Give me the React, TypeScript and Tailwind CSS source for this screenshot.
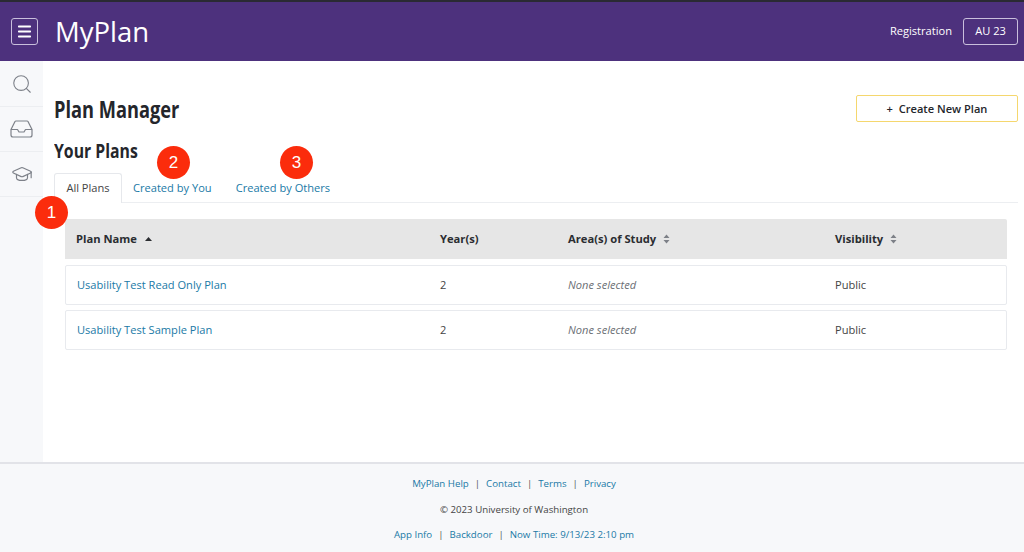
import { GraduationCap, Menu, Search } from 'lucide-react'

const linkColor = 'text-[#2079a6]'

const plans = [
  { name: 'Usability Test Read Only Plan', years: 2, visibility: 'Public' },
  { name: 'Usability Test Sample Plan', years: 2, visibility: 'Public' },
]

function Badge({ n, className }: { n: number; className: string }) {
  return (
    <div
      className={`absolute flex h-[33px] w-[33px] items-center justify-center rounded-full bg-[#fb2c0c] font-['Liberation_Sans',sans-serif] text-[17px] text-white ${className}`}
    >
      {n}
    </div>
  )
}

function SortIcon() {
  return (
    <svg width="7" height="10" viewBox="0 0 7 10" className="ml-[7px]">
      <path d="M3.5 0.5 L6.5 4 H0.5 Z M3.5 9.5 L6.5 6 H0.5 Z" fill="#7d8087" />
    </svg>
  )
}

function TrayIcon() {
  return (
    <svg width="23" height="18" viewBox="0 0 23 18" fill="none" stroke="currentColor" strokeWidth="1.2" strokeLinejoin="round">
      <path d="M1 9.5 L5 1.5 Q5.3 1 6 1 H17 Q17.7 1 18 1.5 L22 9.5" />
      <path d="M1 9.5 H7.5 L9 12 H14 L15.5 9.5 H22 V15 Q22 17 20 17 H3 Q1 17 1 15 Z" />
    </svg>
  )
}

function Sep() {
  return <span className="mx-[6px] text-[#555]">|</span>
}

export default function App() {
  return (
    <div className="relative flex h-[552px] w-[1024px] flex-col overflow-hidden bg-white font-['Open_Sans',sans-serif] text-[#444]">
      <header className="flex h-[61px] shrink-0 items-center border-t-2 border-[#2a2a33] bg-[#4d317d] pl-[11px] pr-[6px] text-white">
        <button className="flex h-[27px] w-[27px] items-center justify-center rounded-[3px] border border-[#c9bfdc]">
          <Menu size={17} strokeWidth={2.6} />
        </button>
        <span className="ml-[17px] text-[27.5px] leading-none">MyPlan</span>
        <span className="ml-auto text-[11.1px]">Registration</span>
        <span className="ml-[11px] flex h-[27px] w-[55px] items-center justify-center rounded-[3px] border border-[#c9bfdc] text-[11.1px]">
          AU 23
        </span>
      </header>

      <div className="flex min-h-0 flex-1">
        <nav className="flex w-[43px] shrink-0 flex-col bg-[#f7f8fa] text-[#7d8189]">
          <div className="flex h-[46px] items-center justify-center border-b border-[#eceef1]">
            <Search size={22} strokeWidth={1.2} />
          </div>
          <div className="flex h-[45px] items-center justify-center border-b border-[#eceef1]">
            <TrayIcon />
          </div>
          <div className="flex h-[45px] items-center justify-center border-b border-[#eceef1]">
            <GraduationCap size={22} strokeWidth={1.3} />
          </div>
        </nav>

        <main className="flex min-w-0 flex-1 flex-col pl-[11px] pr-[6px] pt-[34px]">
          <div className="flex items-start justify-between">
            <h1 className="origin-left scale-x-[0.76] whitespace-nowrap text-[24px] font-bold leading-[28px] text-[#24262b]">
              Plan Manager
            </h1>
            <button className="flex h-[27px] w-[162px] items-center justify-center rounded-[2px] border-[1.5px] border-[#f5d76e] pt-px text-[11.1px] font-semibold text-[#24262b]">
              + &nbsp;Create New Plan
            </button>
          </div>

          <h2 className="mt-[15px] origin-left scale-x-[0.79] whitespace-nowrap text-[20px] font-bold leading-[26px] text-[#24262b]">
            Your Plans
          </h2>

          <div className="mt-[9px] flex h-[30px] border-b border-[#eceef1] pt-px text-[11.1px]">
            <span className="-mt-px flex h-[30px] w-[68px] items-center justify-center rounded-t-[3px] border border-b-0 border-[#e6e8ec] bg-white">
              All Plans
            </span>
            <span className={`ml-[11px] flex items-center ${linkColor}`}>Created by You</span>
            <span className={`ml-[24px] flex items-center ${linkColor}`}>Created by Others</span>
          </div>

          <div className="ml-[11px] mr-[11px] mt-[16px] text-[11.1px]">
            <div className="grid h-[40px] grid-cols-[364px_128px_267px_1fr] items-center rounded-t-[2px] bg-[#e6e6e6] pl-[11px] text-[11.2px] font-bold text-[#2b2d31]">
              <span className="flex items-center">
                Plan Name
                <svg width="7" height="4" viewBox="0 0 7 4" className="ml-[8px]">
                  <path d="M3.5 0 L7 4 H0 Z" fill="#2b2d31" />
                </svg>
              </span>
              <span>Year(s)</span>
              <span className="flex items-center">
                Area(s) of Study
                <SortIcon />
              </span>
              <span className="flex items-center">
                Visibility
                <SortIcon />
              </span>
            </div>

            <div className="mt-[6px] flex flex-col gap-[5px]">
              {plans.map((p) => (
                <div
                  key={p.name}
                  className="grid h-[40px] grid-cols-[363px_128px_267px_1fr] items-center rounded-[2px] border border-[#e8eaee] pl-[11px]"
                >
                  <span className={linkColor}>{p.name}</span>
                  <span>{p.years}</span>
                  <span className="italic text-[#6b6f75]">None selected</span>
                  <span>{p.visibility}</span>
                </div>
              ))}
            </div>
          </div>
        </main>
      </div>

      <footer className="flex h-[90px] shrink-0 flex-col items-center border-t-2 border-[#e2e3e8] bg-[#f7f8fa] pl-[4px] pt-[12px] text-[9.7px] leading-[16px]">
        <div className={linkColor}>
          MyPlan Help<Sep />Contact<Sep />Terms<Sep />Privacy
        </div>
        <div className="mt-[10px]">© 2023 University of Washington</div>
        <div className={`mt-[9px] ${linkColor}`}>
          App Info<Sep />Backdoor<Sep />Now Time: 9/13/23 2:10 pm
        </div>
      </footer>

      <Badge n={1} className="left-[35px] top-[196px]" />
      <Badge n={2} className="left-[157px] top-[146px]" />
      <Badge n={3} className="left-[280px] top-[146px]" />
    </div>
  )
}
